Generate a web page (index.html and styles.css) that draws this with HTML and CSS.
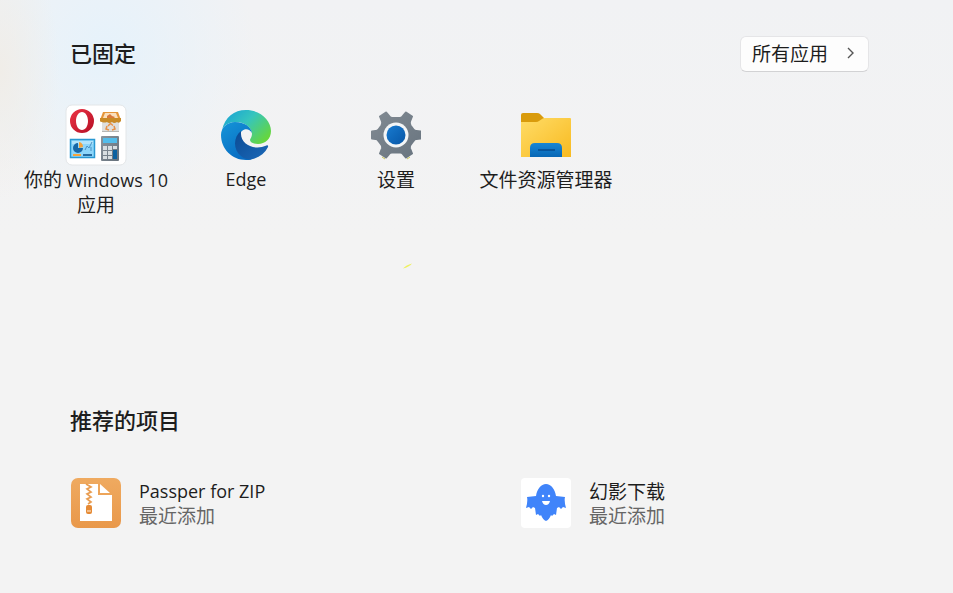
FILE: index.html
```html
<!DOCTYPE html>
<html lang="zh-CN">
<head>
<meta charset="utf-8">
<title>开始</title>
<link rel="stylesheet" href="styles.css">
</head>
<body>
<main class="start">
  <section class="pinned">
    <header class="section-head">
      <h2 class="heading">已固定</h2>
      <button class="all-apps" type="button">所有应用
        <svg class="chevron" viewBox="0 0 10 16" aria-hidden="true"><path d="M2 3l5 5-5 5" fill="none" stroke="#555" stroke-width="1.400"/></svg>
      </button>
    </header>
    <div class="tiles">
      <a class="tile" href="#">
        <span class="tile-icon">
          <svg class="folder-group" viewBox="0 0 62 62" aria-hidden="true">
            <defs>
              <linearGradient id="opera" x1="0" y1="0" x2="1" y2="1"><stop offset="0" stop-color="#ec3445"/><stop offset="1" stop-color="#b50f25"/></linearGradient>
              <linearGradient id="calc" x1="0" y1="0" x2="1" y2="1"><stop offset="0" stop-color="#8b959d"/><stop offset="1" stop-color="#65707b"/></linearGradient>
            </defs>
            <rect x="1" y="1" width="60" height="60" rx="6" fill="#fff" stroke="#e3e6e8"/>
            <path fill="url(#opera)" fill-rule="evenodd" d="M17 5a12 12 0 1 0 0 24a12 12 0 1 0 0-24zM17 8c3.500 0 6 4 6 9s-2.500 9-6 9s-6-4-6-9s2.500-9 6-9z"/>
            <path fill="#dedfde" d="M37 16h17v12H37z"/>
            <path fill="#b6b7b5" d="M37 27h17v1H37z"/>
            <path fill="#e5953a" d="M38 8h15l3 8H35z"/>
            <path fill="#f9dfbd" d="M40 9h11l2 5H38z"/>
            <path fill="#d9793b" d="M42 12l3-2 2 2 3 1-1 1h-7z"/>
            <path fill="#c98a26" d="M35 14h21v3q-2 3-4 1-3 2-5 0-3 2-5 0-3 1-5 0-2 0-2-1z"/>
            <path d="M43 22l2.500-2.500 2.500 2M49 22l1 3-3 1M44 26l-3-1 1-3" fill="none" stroke="#e89148" stroke-width="1.500"/>
            <rect x="5.500" y="35.500" width="24" height="18" fill="#8dd6fa" stroke="#2998d2" stroke-width="1.500"/>
            <path fill="#b1e4fb" d="M7 37h21v3H7z"/>
            <path fill="#1768a7" d="M13 39a5 5 0 1 0 5 5h-5z"/>
            <path fill="#f4a33c" d="M14 38a5 5 0 0 1 4 5l-4 1zM8 50h8v2H8z"/>
            <path d="M20 46l2-4 2 2 3-6M26 47v-4" fill="none" stroke="#4b91c4" stroke-width="1"/>
            <path fill="#276b9f" d="M18 50h9v2h-9z"/>
            <rect x="36" y="32" width="18" height="25" rx="1" fill="url(#calc)"/>
            <rect x="38" y="34" width="14" height="5" fill="#53bdeb"/>
            <path fill="#d8dee1" d="M38 42h4v4h-4zM43 42h4v4h-4zM48 42h4v3h-4zM38 47h4v4h-4zM43 47h4v4h-4zM38 52h4v3h-4zM43 52h4v3h-4z"/>
            <path fill="#0c61a0" d="M48 46h4v9h-4z"/>
          </svg>
        </span>
        <span class="label">你的 <span class="latin">Windows 10</span><br>应用</span>
      </a>
      <a class="tile" href="#">
        <span class="tile-icon">
          <svg class="app-icon" viewBox="0 0 50 50" aria-hidden="true">
            <defs>
              <linearGradient id="edge-top" x1="0" y1="0" x2="1" y2=".7"><stop offset="0" stop-color="#159ed9"/><stop offset=".5" stop-color="#36c5bd"/><stop offset="1" stop-color="#65d63e"/></linearGradient>
              <linearGradient id="edge-left" x1="0" y1="0" x2=".6" y2="1"><stop offset="0" stop-color="#1595d8"/><stop offset="1" stop-color="#086cc2"/></linearGradient>
              <linearGradient id="edge-bottom" x1="0" y1="0" x2="1" y2="1"><stop offset="0" stop-color="#0b4a94"/><stop offset="1" stop-color="#1b69b8"/></linearGradient>
            </defs>
            <path fill="url(#edge-top)" d="M1 20C4 7 13 0 25 0c14 0 25 10 25 21 0 8-6 13-13 13-5 0-8-2-8-4 0-1 2-3 2-6 0-6-7-12-16-12C8 12 3 15 1 20z"/>
            <path fill="url(#edge-left)" d="M0 25c0-8 7-13 14-13 10 0 16 5 17 11-2-4-7-5-10-2-6 5-6 19 6 27l4 1.400C29 50 27 50 25 50 11 50 0 39 0 25z"/>
            <path fill="url(#edge-bottom)" d="M20 21c-8 6-8 19 0 25 3 3 8 4 12 3 7-2 12-6 15-12 .500-1-.500-2-1.500-1.500C33 41 20 34 20 24z"/>
          </svg>
        </span>
        <span class="label latin">Edge</span>
      </a>
      <a class="tile" href="#">
        <span class="tile-icon">
          <svg class="app-icon" viewBox="0 0 50 50" aria-hidden="true">
            <defs>
              <linearGradient id="gear" x1="0" y1="0" x2="1" y2="1"><stop offset="0" stop-color="#818a92"/><stop offset="1" stop-color="#68747f"/></linearGradient>
              <linearGradient id="hub" x1="0" y1="0" x2="1" y2="1"><stop offset="0" stop-color="#187bd0"/><stop offset="1" stop-color="#0756a6"/></linearGradient>
            </defs>
            <path fill="url(#gear)" stroke="url(#gear)" stroke-width="2" stroke-linejoin="round" d="M15 2.500l3 3.500q1 2 3 2h8q2 0 3-2l3-3.500 6 4-2 5q-.500 2 .500 4l3 4q1 1.500 3 1.500l4 .500v7l-4 .500q-2 0-3 2l-3 4q-1 1.500-.500 3.500l2 5-6 4-3-3.500q-1-1.500-3-1.500h-8q-2 0-3 1.500L15 47.500l-6-4 2-5q.500-2-.500-3.500l-3-4q-1-2-3-2L1 28.500v-7l3.500-.500q2 0 3-1.500l3-4q1-2 .500-4L9 6.500z"/>
            <circle cx="25" cy="25" r="12.500" fill="#f3f5f6"/>
            <circle cx="25" cy="25" r="9.500" fill="url(#hub)"/>
            <path d="M11 47l3 2M36 49l3-2" stroke="#c9c653" stroke-width="1"/>
          </svg>
        </span>
        <span class="label">设置</span>
      </a>
      <a class="tile" href="#">
        <span class="tile-icon">
          <svg class="app-icon" viewBox="0 0 50 50" aria-hidden="true">
            <defs>
              <linearGradient id="folder" x1="0" y1="0" x2="1" y2="1"><stop offset="0" stop-color="#ffdc67"/><stop offset="1" stop-color="#f8ba20"/></linearGradient>
              <linearGradient id="pocket" x1="0" y1="0" x2="0" y2="1"><stop offset="0" stop-color="#1786d5"/><stop offset="1" stop-color="#0867b5"/></linearGradient>
            </defs>
            <path fill="#d99b0c" d="M0 5q0-2 2-2h14q2 0 3 1l4 4v5H0z"/>
            <path fill="url(#folder)" d="M0 12h15q2 0 3-1l3-2q1-1 3-1h25q1 0 1 1v38H0z"/>
            <path fill="url(#pocket)" d="M9 47v-9q0-5 5-5h22q5 0 5 5v9z"/>
            <path d="M17 40h17" stroke="#07559c" stroke-width="2"/>
          </svg>
        </span>
        <span class="label">文件资源管理器</span>
      </a>
    </div>
    <svg class="fleck" viewBox="0 0 12 8" aria-hidden="true"><path d="M1 6.500Q4 3 10 1.500Q7 5 1 6.500z" fill="#eef05e"/></svg>
  </section>

  <section class="recommended">
    <h2 class="heading">推荐的项目</h2>
    <div class="items">
      <a class="item" href="#">
        <svg class="app-icon" viewBox="0 0 50 50" aria-hidden="true">
          <defs><linearGradient id="zip" x1="0" y1="0" x2="0" y2="1"><stop offset="0" stop-color="#efaa60"/><stop offset="1" stop-color="#e9984a"/></linearGradient></defs>
          <rect width="50" height="50" rx="7" fill="url(#zip)"/>
          <path fill="#fff" d="M9 6h18v11h14v26H9zM29 6l10 9H29z"/>
          <path d="M15 6l5 3-4 2 4 3-4 2 4 3-4 2 4 3-3 2" fill="none" stroke="#e99d51" stroke-width="1.700"/>
          <rect x="15" y="27" width="6" height="9" rx="2" fill="#e58a35"/>
          <path d="M16 33h4" stroke="#f6cda3" stroke-width="1.500"/>
        </svg>
        <span class="item-text"><span class="item-name latin">Passper for ZIP</span><span class="item-note">最近添加</span></span>
      </a>
      <a class="item" href="#">
        <svg class="app-icon" viewBox="0 0 50 50" aria-hidden="true">
          <rect width="50" height="50" rx="4" fill="#fff"/>
          <path fill="#4084fa" d="M15 18C16 11 20 6 25 6s9 5 10 12l9 1q-1 4 1 11l-3-1-2 2-2-2-2 1-1 7-2-1-2 2-1-1q-2 5-5 6-3-1-5-6l-1 1-2-2-2 1-1-7-2-1-2 2-2-2-3 1q2-7 1-11z"/>
          <circle cx="22" cy="18" r="1.200" fill="#fff"/><circle cx="28" cy="18" r="1.200" fill="#fff"/>
          <path fill="#fff" d="M21 23h8q-1 4-4 4t-4-4z"/>
        </svg>
        <span class="item-text"><span class="item-name">幻影下载</span><span class="item-note">最近添加</span></span>
      </a>
    </div>
  </section>
</main>
</body>
</html>
```
FILE: styles.css
```css
* {
  box-sizing: border-box;
}

body {
  margin: 0;
  min-height: 100vh;
  background:
    radial-gradient(ellipse 60px 130px at 0 70px, #f0ede8, transparent),
    radial-gradient(ellipse 150px 160px at 105px 50px, #e6f2fb, transparent),
    linear-gradient(#f1f2f4, #f3f3f3 40%);
  color: #1d1d1d;
  font-family: "Noto Sans CJK SC", sans-serif;
  font-size: 19px;
  line-height: 24px;
}

a {
  color: inherit;
  text-decoration: none;
}

.start {
  padding: 36px 32px 24px 21px;
}

.pinned {
  position: relative;
  min-height: 367px;
}

.section-head {
  display: flex;
  align-items: flex-start;
  justify-content: space-between;
  margin-bottom: 32px;
  padding-right: 52px;
}

.heading {
  margin: 0;
  padding-left: 49px;
  font-size: 22px;
  font-weight: 500;
  line-height: 32px;
}

.all-apps {
  display: flex;
  align-items: center;
  gap: 18px;
  height: 36px;
  padding: 0 12px 2px 11px;
  border: 1px solid #e5e5e7;
  border-bottom-color: #d2d2d4;
  border-radius: 6px;
  background: #fdfdfd;
  color: inherit;
  font: inherit;
}

.chevron {
  width: 10px;
  height: 16px;
}

.tiles {
  display: grid;
  grid-template-columns: repeat(6, 1fr);
}

.tile {
  display: flex;
  flex-direction: column;
  align-items: center;
}

.tile-icon {
  display: flex;
  align-items: center;
  justify-content: center;
  height: 62px;
}

.folder-group {
  width: 62px;
  height: 62px;
}

.app-icon {
  flex: none;
  width: 50px;
  height: 50px;
}

.label {
  padding-top: 1px;
  text-align: center;
  white-space: nowrap;
}

.latin {
  font-family: "Open Sans", "Noto Sans CJK SC", sans-serif;
  font-size: 18px;
}

.fleck {
  position: absolute;
  top: 226px;
  left: 381px;
  width: 12px;
  height: 8px;
}

.items {
  display: grid;
  grid-template-columns: repeat(2, 1fr);
  margin-top: 43px;
}

.item {
  display: flex;
  align-items: center;
  gap: 18px;
  padding-left: 50px;
}

.item-text {
  display: flex;
  flex-direction: column;
}

.item-note {
  color: #666;
}
```
